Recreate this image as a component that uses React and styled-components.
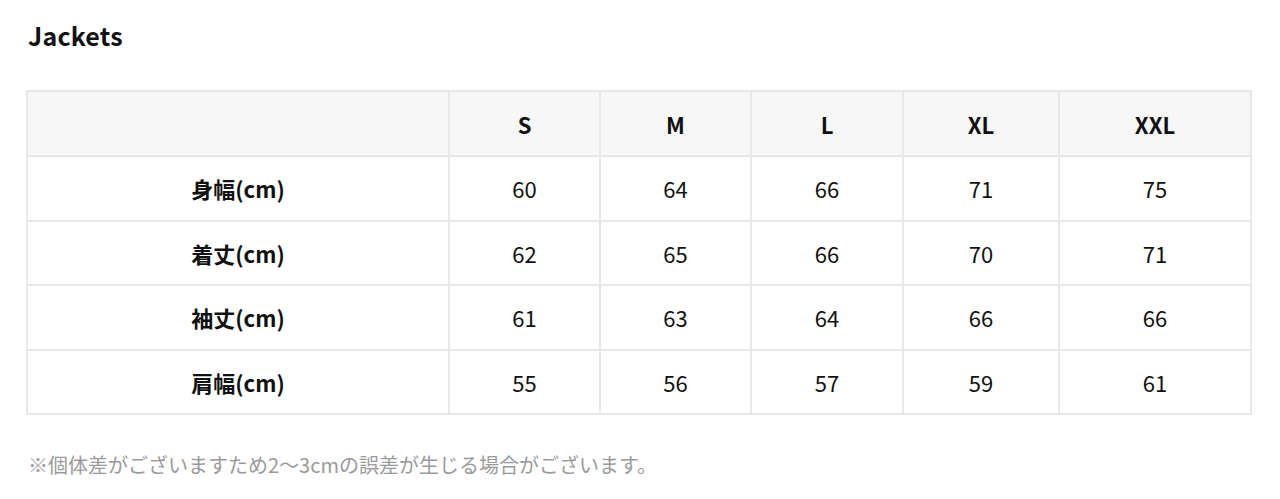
import React from 'react';
import styled, { createGlobalStyle } from 'styled-components';

const GlobalStyle = createGlobalStyle`
    body {
        margin: 0;
        background: #ffffff;
        font-family: "Noto Sans CJK JP", "Noto Sans", sans-serif;
        color: #111111;
    }
`;

const sizes = ['S', 'M', 'L', 'XL', 'XXL'];
const colWidths = [422, 151, 151, 152, 156, 192];

const rows = [
    { label: '身幅(cm)', values: [60, 64, 66, 71, 75] },
    { label: '着丈(cm)', values: [62, 65, 66, 70, 71] },
    { label: '袖丈(cm)', values: [61, 63, 64, 66, 66] },
    { label: '肩幅(cm)', values: [55, 56, 57, 59, 61] },
];

// Size chart
export default () => (
    <Page>
        <GlobalStyle />
        <Title>Jackets</Title>
        <Table>
            <colgroup>
                {colWidths.map((w, i) => (
                    <col key={i} style={{ width: w }} />
                ))}
            </colgroup>
            <thead>
                <tr>
                    <HeadCell />
                    {sizes.map(size => (
                        <HeadCell key={size}>{size}</HeadCell>
                    ))}
                </tr>
            </thead>
            <tbody>
                {rows.map(row => (
                    <tr key={row.label}>
                        <Cell bold>{row.label}</Cell>
                        {row.values.map((v, i) => (
                            <Cell key={i}>{v}</Cell>
                        ))}
                    </tr>
                ))}
            </tbody>
        </Table>
        <Note>※個体差がございますため2〜3cmの誤差が生じる場合がございます。</Note>
    </Page>
);

const Page = styled.div`
    padding: 17px 28px 20px 26px;
`;

const Title = styled.h2`
    margin: 0 0 37px 2px;
    font-size: 25px;
    font-weight: 700;
    line-height: 36px;
    letter-spacing: 0.2px;
`;

const Table = styled.table`
    width: 1222px;
    border-collapse: collapse;
    table-layout: fixed;
`;

const HeadCell = styled.th`
    height: 63px;
    padding: 0;
    background: #f7f7f7;
    border: 2px solid #e8e8e8;
    font-size: 22px;
    font-weight: 700;
    text-align: center;
`;

const Cell = styled.td`
    height: 62.5px;
    padding: 0;
    border: 2px solid #e8e8e8;
    font-size: 22px;
    font-weight: ${({ bold }) => (bold ? 700 : 400)};
    text-align: center;
`;

const Note = styled.p`
    margin: 35px 0 0 2px;
    font-size: 20px;
    color: #9a9a9a;
`;
